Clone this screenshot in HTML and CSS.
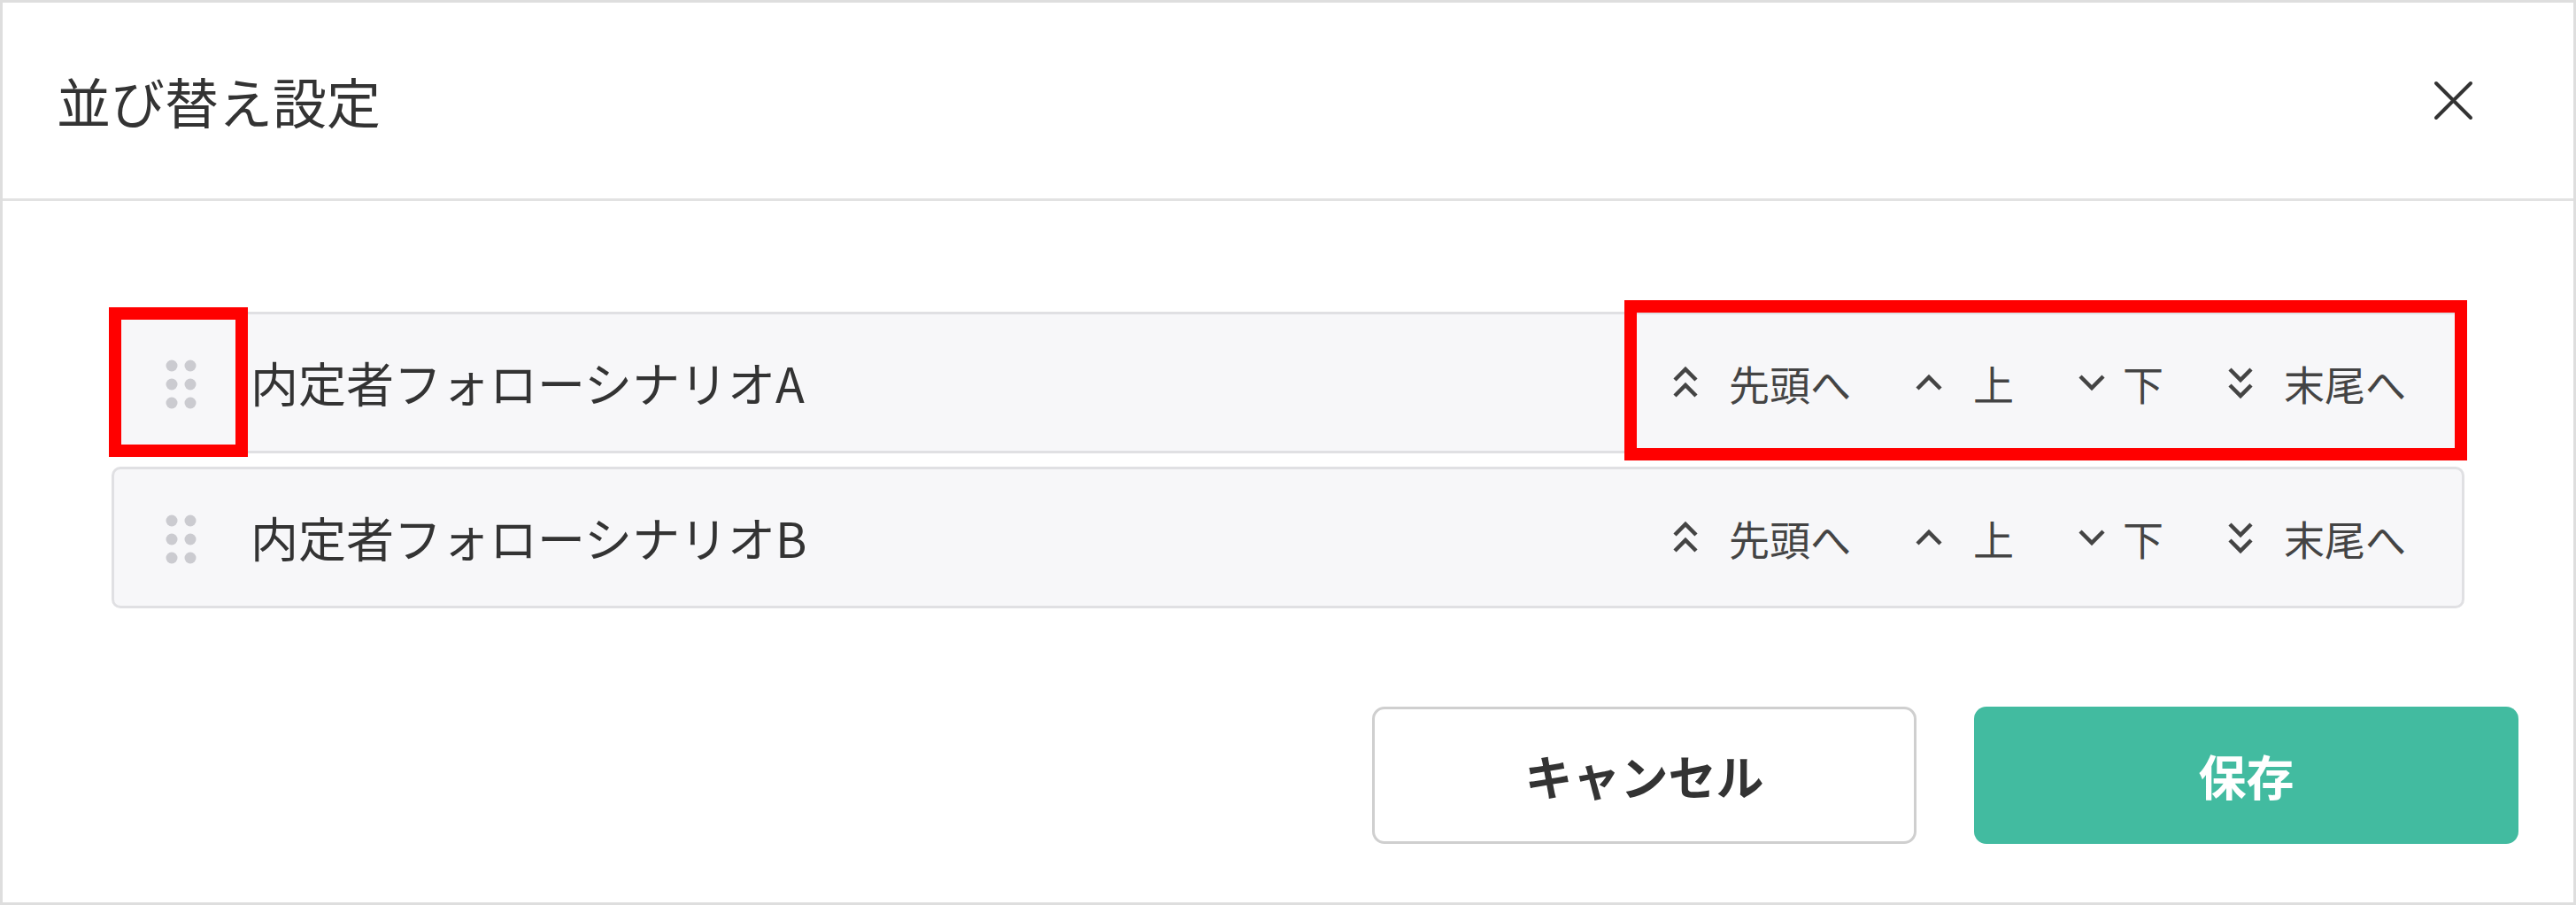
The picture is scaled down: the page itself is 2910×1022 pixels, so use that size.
FILE: index.html
```html
<!DOCTYPE html>
<html lang="ja">
<head>
  <meta charset="UTF-8">
  <title>並び替え設定</title>
  <link rel="stylesheet" href="styles.css">
</head>
<body>
  <div class="modal">

    <!-- ヘッダー -->
    <div class="modal-header">
      <h2 class="modal-title">並び替え設定</h2>
      <button class="close-btn" type="button" aria-label="閉じる">
        <svg width="45" height="45" viewBox="0 0 45 45"><path d="M3 3L42 42M42 3L3 42" stroke="#333" stroke-width="4" fill="none" stroke-linecap="round"/></svg>
      </button>
    </div>

    <!-- 並び替えリスト -->
    <div class="modal-body">
      <ul class="sort-list">
        <li class="sort-row">
          <span class="drag-handle">
            <svg width="37" height="56" viewBox="0 0 37 56"><g fill="#cbcbd0"><circle cx="8" cy="7" r="6.5"/><circle cx="29" cy="7" r="6.5"/><circle cx="8" cy="28" r="6.5"/><circle cx="29" cy="28" r="6.5"/><circle cx="8" cy="49" r="6.5"/><circle cx="29" cy="49" r="6.5"/></g></svg>
          </span>
          <span class="row-name">内定者フォローシナリオA</span>
          <div class="row-actions">
            <button class="move-btn" type="button">
              <svg width="30" height="40" viewBox="0 0 30 40"><path d="M3 17L15 5L27 17M3 35L15 23L27 35" stroke="#444" stroke-width="4.5" fill="none"/></svg>
              先頭へ
            </button>
            <button class="move-btn" type="button">
              <svg width="32" height="20" viewBox="0 0 32 20"><path d="M3 17L16 4L29 17" stroke="#444" stroke-width="4.5" fill="none"/></svg>
              上
            </button>
            <button class="move-btn move-btn-down" type="button">
              <svg width="32" height="20" viewBox="0 0 32 20"><path d="M3 3L16 16L29 3" stroke="#444" stroke-width="4.5" fill="none"/></svg>
              下
            </button>
            <button class="move-btn" type="button">
              <svg width="30" height="40" viewBox="0 0 30 40"><path d="M3 5L15 17L27 5M3 23L15 35L27 23" stroke="#444" stroke-width="4.5" fill="none"/></svg>
              末尾へ
            </button>
          </div>
          <!-- 注釈の赤枠 -->
          <span class="mark mark-handle"></span>
          <span class="mark mark-actions"></span>
        </li>
        <li class="sort-row">
          <span class="drag-handle">
            <svg width="37" height="56" viewBox="0 0 37 56"><g fill="#cbcbd0"><circle cx="8" cy="7" r="6.5"/><circle cx="29" cy="7" r="6.5"/><circle cx="8" cy="28" r="6.5"/><circle cx="29" cy="28" r="6.5"/><circle cx="8" cy="49" r="6.5"/><circle cx="29" cy="49" r="6.5"/></g></svg>
          </span>
          <span class="row-name">内定者フォローシナリオB</span>
          <div class="row-actions">
            <button class="move-btn" type="button">
              <svg width="30" height="40" viewBox="0 0 30 40"><path d="M3 17L15 5L27 17M3 35L15 23L27 35" stroke="#444" stroke-width="4.5" fill="none"/></svg>
              先頭へ
            </button>
            <button class="move-btn" type="button">
              <svg width="32" height="20" viewBox="0 0 32 20"><path d="M3 17L16 4L29 17" stroke="#444" stroke-width="4.5" fill="none"/></svg>
              上
            </button>
            <button class="move-btn move-btn-down" type="button">
              <svg width="32" height="20" viewBox="0 0 32 20"><path d="M3 3L16 16L29 3" stroke="#444" stroke-width="4.5" fill="none"/></svg>
              下
            </button>
            <button class="move-btn" type="button">
              <svg width="30" height="40" viewBox="0 0 30 40"><path d="M3 5L15 17L27 5M3 23L15 35L27 23" stroke="#444" stroke-width="4.5" fill="none"/></svg>
              末尾へ
            </button>
          </div>
        </li>
      </ul>
    </div>

    <!-- フッター -->
    <div class="modal-footer">
      <button class="btn btn-cancel" type="button">キャンセル</button>
      <button class="btn btn-save" type="button">保存</button>
    </div>

  </div>
</body>
</html>
```

FILE: styles.css
```css
body { margin: 0; font-family: "Noto Sans CJK JP", "Noto Sans", sans-serif; color: #333; background: #fff; }
button { font-family: inherit; cursor: pointer; }

.modal { width: 2910px; height: 1022px; box-sizing: border-box; border: 3px solid #dedede; background: #fff; }

.modal-header { height: 221px; display: flex; align-items: center; justify-content: space-between; padding: 0 113px 0 61px; border-bottom: 3px solid #e2e2e2; }
.modal-title { margin: 0; font-size: 61px; font-weight: 400; color: #333; line-height: 1; }
.close-btn { background: none; border: 0; padding: 0; display: flex; }

.modal-body { padding: 125px 123px 111px; }
.sort-list { list-style: none; margin: 0; padding: 0; display: flex; flex-direction: column; gap: 15px; }
.sort-row { position: relative; height: 160px; box-sizing: border-box; display: flex; align-items: center; background: #f7f7f9; border: 3px solid #e0e0e3; border-radius: 10px; padding: 0 63px 0 57px; }
.drag-handle { display: flex; margin-right: 60px; margin-top: 4px; }
.row-name { font-size: 54px; color: #333; line-height: 1; }

.row-actions { margin-left: auto; display: flex; align-items: center; gap: 72px; }
.move-btn { background: none; border: 0; padding: 0; display: flex; align-items: center; gap: 34px; font-size: 46px; color: #444; line-height: 1; }
.move-btn-down { gap: 19px; }

.mark { position: absolute; border: 14px solid #ff0000; box-sizing: border-box; }
.mark-handle { left: -6px; top: -8px; width: 157px; height: 169px; }
.mark-actions { right: -6px; top: -16px; width: 952px; height: 181px; }

.modal-footer { display: flex; justify-content: flex-end; gap: 65px; padding: 0 62px 66px; }
.btn { width: 615px; height: 155px; border-radius: 14px; font-size: 54px; font-weight: 700; }
.btn-cancel { background: #fff; border: 3px solid #cfcfcf; color: #333; }
.btn-save { background: #42bba0; border: 0; color: #fff; }
```
